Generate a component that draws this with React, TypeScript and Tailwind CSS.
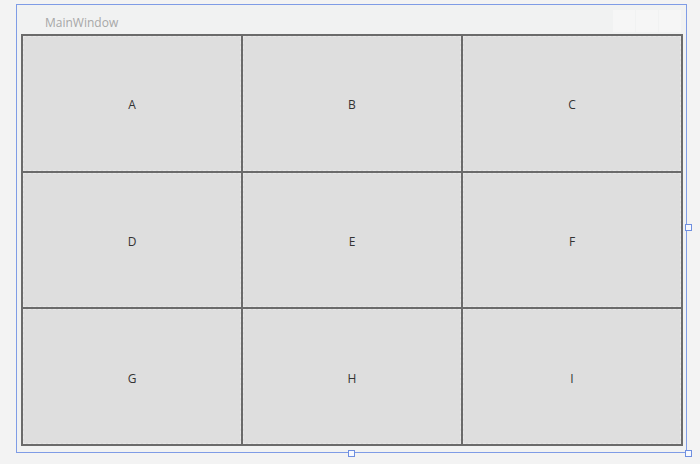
const cells = ["A", "B", "C", "D", "E", "F", "G", "H", "I"];

function Handle({ className }: { className: string }) {
  return (
    <div
      className={`absolute h-[7px] w-[7px] border border-[#6f8fe0] bg-[#f7f9ff] ${className}`}
    />
  );
}

export default function App() {
  return (
    <div
      className="relative h-[464px] w-[700px] overflow-hidden bg-[#f3f3f3] pl-[16px] pt-[4px]"
      style={{ fontFamily: '"Open Sans", "Noto Sans", sans-serif' }}
    >
      {/* Designer window */}
      <div className="flex h-[449px] w-[671px] flex-col border border-[#7f9ce6] bg-[#f1f2f2]">
        {/* Title bar */}
        <div className="flex h-[29px] shrink-0 items-start justify-between pl-[28px] pr-[5px]">
          <span className="pt-[10px] text-[12px] leading-[16px] text-[#a7a7a7]">MainWindow</span>
          <div className="flex gap-[1px] pt-[5px]">
            <div className="h-[22px] w-[22px] bg-[#f6f6f6]" />
            <div className="h-[22px] w-[22px] bg-[#f6f6f6]" />
            <div className="h-[22px] w-[22px] bg-[#f6f6f6]" />
          </div>
        </div>

        {/* Uniform grid */}
        <div className="ml-[4px] mr-[3px] grid h-[412px] grid-cols-3 grid-rows-3 gap-[2px] bg-[#6b6b6b] p-[2px]">
          {cells.map((c) => (
            <div
              key={c}
              className="flex items-center justify-center border border-dashed border-[#e8e8e8] bg-[#dedede] pt-[4px] text-[12px] text-[#333333]"
            >
              {c}
            </div>
          ))}
        </div>
      </div>

      {/* Resize handles */}
      <Handle className="left-[685px] top-[224px]" />
      <Handle className="left-[348px] top-[450px]" />
      <Handle className="left-[685px] top-[450px]" />
    </div>
  );
}
